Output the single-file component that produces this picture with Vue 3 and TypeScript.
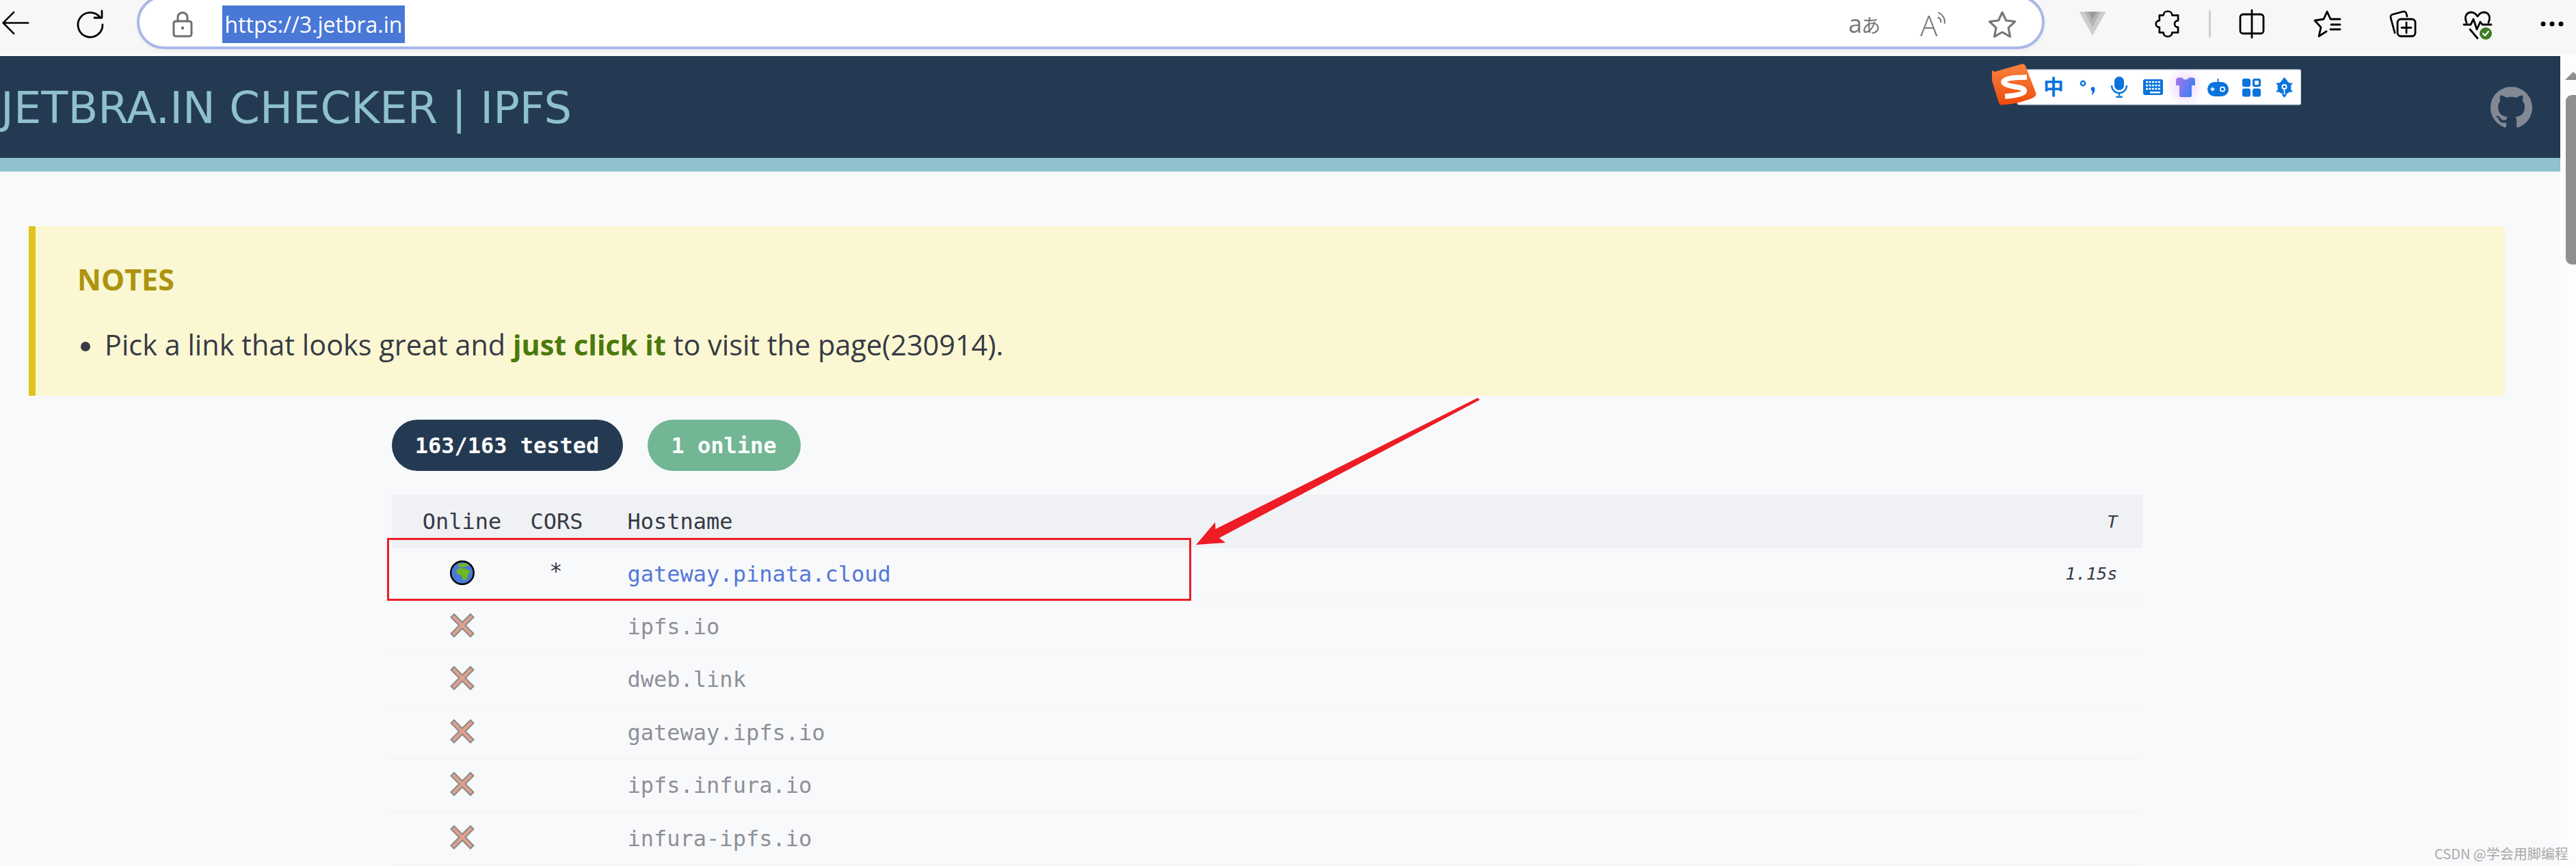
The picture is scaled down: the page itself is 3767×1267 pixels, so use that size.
<script setup lang="ts">
const failed: string[] = ['ipfs.io', 'dweb.link', 'gateway.ipfs.io', 'ipfs.infura.io', 'infura-ipfs.io']
</script>

<template>
  <div class="screen">
    <div class="toolbar">
      <svg class="back" viewBox="0 0 42 36"><path d="M42 18H2M19 1 2 18l17 17" /></svg>
      <svg class="reload" viewBox="0 0 40 40"><path d="M34 10A18 18 0 1 0 38 21" /><path d="M37 1V11H26" /></svg>
      <div class="address">
        <div class="address-left">
          <svg class="lock" viewBox="0 0 30 38"><rect x="2" y="14" width="26" height="22" rx="3" /><path d="M8 14V8a7 6.5 0 0 1 14 0v6" /><circle cx="15" cy="24" r="2.2" /></svg>
          <span class="url">https://3.jetbra.in</span>
        </div>
        <div class="address-right">
          <span class="translate"><span class="tr-a">a</span><span class="tr-k">あ</span></span>
          <span class="read"><span class="read-a">A</span><svg viewBox="0 0 16 30"><path d="M2 11a8 8 0 0 1 5 8M3 2a18 18 0 0 1 11 19" /></svg></span>
          <svg class="star" viewBox="0 0 42 42"><path d="M21 3l5.6 12 13 1.6-9.600 9 2.600 13L21 32l-11.600 6.600 2.600-13-9.600-9 13-1.600z" /></svg>
        </div>
      </div>
      <div class="extensions">
        <svg class="ext vue" viewBox="0 0 40 36"><path fill="#cdcdcd" d="M0 0h40L20 36z" /><path fill="#b4b4b4" d="M8 0h24L20 24z" /><path fill="#9a9a9a" d="M14 0h12l-6 12z" /></svg>
        <svg class="ext puzzle" viewBox="0 0 38 40"><path d="M12 7C12-1 25-1 25 7h9v8c-7 0-7 10 0 10v8h-9c0 8-13 8-13 0H6v-8c-7 0-7-10 0-10V7z" /></svg>
        <i class="sep"></i>
        <svg class="ext split" viewBox="0 0 38 40"><path d="M17 6H6a4 4 0 0 0-4 4v20a4 4 0 0 0 4 4h11M21 6h11a4 4 0 0 1 4 4v20a4 4 0 0 1-4 4H21M19 0v40" /></svg>
        <svg class="ext fav" viewBox="0 0 40 40"><path d="M20 2 15 13 2 15l9 10-3 13 11-7M20 2l5 11h14M26 21h13M25 28h14" /></svg>
        <svg class="ext coll" viewBox="0 0 40 40"><rect x="13" y="13" width="26" height="25" rx="5" /><path d="M26 18v15M19 25.500h14M9 33 3 11a4 4 0 0 1 3-5L21 2a4 4 0 0 1 5 3l1 4" /></svg>
        <svg class="ext health" viewBox="0 0 40 42"><path d="M4 17C0 8 4 2 11 2c4 0 7 3 9 6 2-3 5-6 9-6 7 0 11 6 7 15M0 20h10l4-8 5 15 5-11 3 4h13M9 27l11 13" /><circle class="badge" cx="32" cy="33" r="9" /><path class="tick" d="M28 33l3 3 5-6" /></svg>
        <svg class="dots" viewBox="0 0 34 8"><circle cx="4" cy="4" r="3.500" /><circle cx="17" cy="4" r="3.500" /><circle cx="30" cy="4" r="3.500" /></svg>
      </div>
    </div>

    <div class="viewport">
      <div class="page">
        <header class="header">
          <h1 class="title">JETBRA.IN CHECKER | IPFS</h1>
          <svg class="ime" viewBox="2913 93 452 61">
            <defs>
              <linearGradient id="logoFill" x1="0" y1="0" x2="0" y2="1"><stop offset="0" stop-color="#f7853f" /><stop offset="1" stop-color="#f04a0c" /></linearGradient>
              <linearGradient id="shirtFill" x1="0" y1="0" x2="1" y2="0.4"><stop offset="0" stop-color="#a876ec" /><stop offset="1" stop-color="#3f7ff0" /></linearGradient>
              <radialGradient id="halo" cx="0.5" cy="0.5" r="0.6"><stop offset="0.4" stop-color="#f3e4ff" /><stop offset="1" stop-color="#ffffff" /></radialGradient>
            </defs>
            <rect x="2950" y="102" width="415" height="51" rx="3" fill="#fff" stroke="#c3cfdd" stroke-width="1.500" />
            <rect x="3171" y="103" width="48" height="49" fill="url(#halo)" />
            <path d="M2917 105 2957 93.500a5 5 0 0 1 5 3l15 39a6 6 0 0 1-3 7c-12 6-30 10-47 11-2 0-3-1-4-3l-13-42a5 5 0 0 1 2-6z" fill="url(#logoFill)" />
            <path d="M2964 113c-15 0-29 1-33 5-4 4 4 7 16 9 8 1 15 3 13 7-2 4-15 6-28 7" fill="none" stroke="#fff" stroke-width="7.500" />
            <text class="ime-zh" x="3003" y="138" text-anchor="middle">中</text>
            <circle cx="3046" cy="122" r="3.200" fill="none" stroke="#0a73dc" stroke-width="2.400" />
            <path d="M3060 127a3.500 3.500 0 0 1 3.500 3.500c0 4-2 7-5 9 1-3 1.500-5 1-6a3.500 3.500 0 0 1 .5-6.500z" fill="#0a73dc" />
            <rect x="3092" y="112" width="14" height="20" rx="7" fill="#0a73dc" />
            <path d="M3088 125a11 11 0 0 0 22 0M3099 136v4" fill="none" stroke="#0a73dc" stroke-width="2.400" />
            <rect x="3094" y="140.500" width="10" height="2.500" rx="1.200" fill="#0a73dc" />
            <rect x="3134" y="116" width="29" height="23" rx="3" fill="#0a73dc" />
            <path d="M3138 120h21M3138 125h21M3138 130h21" stroke="#fff" stroke-width="2.500" stroke-dasharray="3 1.500" />
            <rect x="3144" y="134" width="15" height="2.500" fill="#fff" />
            <path d="M3182 117c0-2 2-3.500 4-3.500h5c1 2 3 3 5 3s4-1 5-3h5c2 0 4 1.500 4 3.500v8h-5v15c0 1-1 2-2 2h-14c-1 0-2-1-2-2v-15h-5z" fill="url(#shirtFill)" />
            <rect x="3228" y="120" width="31" height="21" rx="10.500" fill="#0a73dc" />
            <path d="M3243.500 115v6" stroke="#0a73dc" stroke-width="2" />
            <circle cx="3250" cy="130.500" r="3.200" fill="none" stroke="#fff" stroke-width="1.800" />
            <path d="M3232.500 130.500h6M3235.500 127.500v6" stroke="#fff" stroke-width="1.800" />
            <rect x="3279" y="115" width="12" height="12" rx="3" fill="#0a73dc" />
            <rect x="3294" y="115" width="12" height="12" rx="3" fill="#0a73dc" />
            <rect x="3297" y="118" width="6" height="6" rx="1" fill="#fff" />
            <rect x="3279" y="129.500" width="12" height="12" rx="3" fill="#0a73dc" />
            <rect x="3294" y="129.500" width="12" height="12" rx="3" fill="#0a73dc" />
            <circle cx="3340.500" cy="128" r="10" fill="#0a73dc" />
            <path d="M3340.500 113l5 6h-10zM3328 122l5-1-1 5zM3353 122l-5-1 1 5zM3328 134l5 1-1-5zM3353 134l-5 1 1-5zM3340.500 143l-4-5h8z" fill="#0a73dc" />
            <circle cx="3340.500" cy="127" r="3" fill="none" stroke="#fff" stroke-width="2" />
            <path d="M3340.500 130v8" stroke="#fff" stroke-width="1.600" />
          </svg>
          <svg class="github" viewBox="0 0 16 16"><path d="M8 0C3.58 0 0 3.58 0 8c0 3.54 2.29 6.53 5.47 7.59.4.07.55-.17.55-.38 0-.19-.01-.82-.01-1.49-2.01.37-2.53-.49-2.69-.94-.09-.23-.48-.94-.82-1.13-.28-.15-.68-.52-.01-.53.63-.01 1.08.58 1.23.82.72 1.21 1.87.87 2.33.66.07-.52.28-.87.51-1.07-1.78-.2-3.64-.89-3.64-3.95 0-.87.31-1.59.82-2.15-.08-.2-.36-1.02.08-2.12 0 0 .67-.21 2.2.82.64-.18 1.32-.27 2-.27.68 0 1.36.09 2 .27 1.53-1.04 2.2-.82 2.2-.82.44 1.1.16 1.92.08 2.12.51.56.82 1.27.82 2.15 0 3.07-1.87 3.75-3.65 3.95.29.25.54.73.54 1.48 0 1.07-.01 1.93-.01 2.2 0 .21.15.46.55.38A8.013 8.013 0 0016 8c0-4.42-3.58-8-8-8z" /></svg>
        </header>
        <div class="rule"></div>

        <div class="content">
          <section class="notes">
            <h2 class="notes-title">NOTES</h2>
            <div class="notes-item"><i class="bullet"></i><span>Pick a link that looks great and <strong>just click it</strong> to visit the page(230914).</span></div>
          </section>

          <div class="results">
            <div class="badges">
              <span class="pill pill-dark">163/163 tested</span>
              <span class="pill pill-green">1 online</span>
            </div>

            <div class="table">
              <div class="row head">
                <span class="col-online">Online</span>
                <span class="col-cors">CORS</span>
                <span class="col-host">Hostname</span>
                <em class="col-time">T</em>
              </div>
              <div class="row body-row">
                <span class="col-online">
                  <svg class="status" viewBox="0 0 36 36">
                    <circle cx="18" cy="18" r="16.800" fill="#4a78d6" stroke="#000" stroke-width="2.400" />
                    <path fill="#6db81f" d="M11.500 5 24.600 3.900 28 7.200l-8.300 2.600-6.600 0zM9.200 13.800l5.600-2.700 8.100 1 6.600 3.300-3.300 6.500-1.600 5-4.900 2.600-3.300-7.600-5.600-2.200z" />
                  </svg>
                </span>
                <span class="col-cors star-cell">*</span>
                <span class="col-host"><a class="link">gateway.pinata.cloud</a></span>
                <em class="col-time">1.15s</em>
              </div>
              <div v-for="host in failed" :key="host" class="row body-row">
                <span class="col-online">
                  <svg class="status" viewBox="0 0 36 36">
                    <path fill="#e2a08c" stroke="#8a8a8a" stroke-width="2" d="M6 1.500 18 13.500 30 1.500 34.500 6 22.500 18 34.500 30 30 34.500 18 22.500 6 34.500 1.500 30 13.500 18 1.500 6z" />
                  </svg>
                </span>
                <span class="col-cors"></span>
                <span class="col-host dead">{{ host }}</span>
                <em class="col-time"></em>
              </div>
            </div>
          </div>
        </div>
      </div>

      <div class="scrollbar">
        <i class="scroll-arrow"></i>
        <i class="scroll-thumb"></i>
      </div>
    </div>

    <div class="mark-box"></div>
    <svg class="mark-arrow" viewBox="1749 582 416 216"><path fill="#ee1c25" d="M1749 797l28-33 .5 10L2161 582l3 3-381 202 9 7z" /></svg>
    <div class="watermark">CSDN @学会用脚编程</div>
  </div>
</template>

<style>
html, body { margin: 0; padding: 0; background: #f8f9fb; }
</style>

<style scoped>
.screen {
  position: relative;
  width: 3767px;
  height: 1267px;
  overflow: hidden;
  background: #f8f9fb;
  display: flex;
  flex-direction: column;
  font-family: "Open Sans", "Noto Sans", sans-serif;
}

/* Browser chrome */
.toolbar {
  flex: 0 0 82px;
  display: flex;
  align-items: flex-start;
  background: #f7f7f7;
  box-sizing: border-box;
  padding-left: 2px;
  border-bottom: 3px solid #fbfbfb;
}
.toolbar svg { fill: none; stroke: #000; stroke-width: 2.800; stroke-linejoin: round; stroke-linecap: round; overflow: visible; }
.back { width: 40px; height: 33px; margin-top: 17px; }
.reload { width: 40px; height: 40px; margin: 15px 0 0 70px; }
.address {
  box-sizing: border-box;
  width: 2790px;
  height: 79px;
  margin: -7px 0 0 48px;
  border: 4px solid #a9b8e8;
  border-radius: 46px;
  background: #fff;
  box-shadow: 0 3px 4px #efefef;
  display: flex;
  align-items: center;
  justify-content: space-between;
}
.address-left { display: flex; align-items: center; padding-left: 48px; margin-top: 6px; }
.toolbar .lock { width: 30px; height: 38px; stroke: #6e6e6e; stroke-width: 3; }
.toolbar .lock circle { fill: #6e6e6e; stroke: none; }
.url {
  margin-left: 43px;
  width: 267px;
  height: 55px;
  background: #4a78d6;
  color: #fff;
  font-size: 32px;
  line-height: 55px;
  white-space: nowrap;
  text-align: center;
}
.address-right { display: flex; align-items: center; padding-right: 37px; margin-top: 6px; }
.translate { display: flex; align-items: baseline; width: 44px; color: #757575; line-height: 40px; font-family: "Noto Sans CJK JP", "Open Sans", sans-serif; }
.tr-a { font-size: 36px; font-family: "Open Sans", sans-serif; }
.tr-k { font-size: 28px; margin-left: -1px; }
.read { display: flex; align-items: flex-start; margin-left: 61px; width: 40px; height: 38px; color: #757575; }
.read-a { font-size: 42px; line-height: 40px; font-weight: 300; }
.toolbar .read svg { width: 14px; height: 24px; margin-left: -1px; stroke: #757575; stroke-width: 2.600; }
.toolbar .star { width: 42px; height: 42px; margin-left: 59px; stroke: #757575; stroke-width: 3; }

.extensions { display: flex; align-items: flex-start; margin-left: 50px; }
.ext { width: 40px; height: 40px; margin-top: 15px; }
.toolbar .vue { height: 35px; margin-top: 17px; stroke: none; }
.puzzle { margin-left: 72px; width: 37px; }
.sep { width: 3px; height: 40px; margin: 15px 0 0 41px; background: #cfcfcf; }
.split { margin-left: 40px; }
.fav { margin-left: 70px; }
.coll { margin-left: 70px; }
.health { margin-left: 70px; height: 42px; margin-top: 16px; }
.toolbar .health .badge { fill: #3f7d23; stroke: none; }
.toolbar .health .tick { stroke: #fff; stroke-width: 2.200; }
.toolbar .dots { width: 34px; height: 8px; margin: 31px 0 0 72px; fill: #000; stroke: none; }

/* Page */
.viewport { flex: 1; display: flex; min-height: 0; }
.page { width: 3744px; flex: none; }
.header {
  position: relative;
  height: 149px;
  background: #243a52;
  display: flex;
  align-items: center;
  justify-content: space-between;
  box-sizing: border-box;
  padding: 0 41px 0 1px;
}
.title {
  margin: 0;
  color: #8fc1cd;
  font-family: "DejaVu Sans", sans-serif;
  font-size: 64px;
  font-weight: 400;
  line-height: 1;
  position: relative;
  top: 1px;
}
.ime { position: absolute; left: 2913px; top: 11px; width: 452px; height: 61px; }
.ime-zh { font-family: "Noto Sans CJK SC", sans-serif; font-size: 30px; font-weight: 700; fill: #0a73dc; }
.github { width: 61px; height: 61px; fill: #838895; margin-top: 2px; }
.rule { height: 20px; background: #90c1cc; }

.content { padding: 80px 81px 0 42px; }
.notes {
  box-sizing: border-box;
  height: 248px;
  background: #fbf7d2;
  border-left: 10px solid #e0c31c;
  padding: 46px 0 0 61px;
  color: #363a45;
}
.notes-title {
  margin: 0;
  color: #ac9410;
  font-size: 43px;
  line-height: 64px;
  font-weight: 700;
}
.notes-item { display: flex; align-items: center; margin-top: 33px; font-size: 41.400px; line-height: 60px; white-space: nowrap; }
.notes-item strong { color: #4a7a0c; font-weight: 700; }
.bullet { width: 14px; height: 14px; border-radius: 50%; background: #363a45; margin: 6px 21px 0 5px; flex: none; }

.results { width: 2560px; margin: 35px auto 0; font-family: "DejaVu Sans Mono", "Liberation Mono", monospace; }
.badges { display: flex; gap: 36px; height: 75px; }
.pill {
  display: flex;
  align-items: center;
  justify-content: center;
  box-sizing: border-box;
  height: 75px;
  border-radius: 38px;
  color: #fff;
  font-size: 32px;
  font-weight: 700;
  white-space: nowrap;
}
.pill-dark { width: 338px; background: #243a52; }
.pill-green { width: 224px; background: #72b694; }

.table { margin-top: 35px; }
.row {
  display: grid;
  grid-template-columns: 114px 75px 1fr auto;
  column-gap: 43px;
  align-items: center;
  box-sizing: border-box;
  padding: 0 36px 0 46px;
  color: #363a45;
  font-size: 32px;
}
.head { height: 78px; background: #f0f1f5; }
.body-row { height: 77.400px; border-bottom: 2px solid #f4f5f7; }
.col-online { display: flex; justify-content: center; }
.col-cors { text-align: center; }
.col-host { padding-left: 24px; white-space: nowrap; }
.col-time { font-size: 25.300px; font-style: italic; min-height: 1px; }
.star-cell { position: relative; top: -5px; }
.status { width: 36px; height: 36px; display: block; position: relative; top: -2px; }
.link { color: #5477d8; text-decoration: none; }
.dead { color: #8e9096; }

.scrollbar {
  flex: 1;
  background: #fdfdfd;
  overflow: hidden;
  display: flex;
  flex-direction: column;
  padding: 23px 0 0 7px;
}
.scroll-arrow {
  width: 0;
  height: 0;
  border-left: 12px solid transparent;
  border-right: 12px solid transparent;
  border-bottom: 12px solid #8f8f8f;
}
.scroll-thumb {
  width: 34px;
  height: 248px;
  margin: 22px 0 0 1px;
  border-radius: 9px;
  background: #8f8f8f;
}

/* Hand-drawn annotation lying over the screenshot */
.mark-box {
  position: absolute;
  left: 566px;
  top: 787px;
  width: 1176px;
  height: 92px;
  box-sizing: border-box;
  border: 3px solid #ee1c25;
  border-radius: 1px;
}
.mark-arrow { position: absolute; left: 1749px; top: 582px; width: 416px; height: 216px; }
.watermark {
  position: absolute;
  left: 3560px;
  top: 1236px;
  color: #a9a9a9;
  font-family: "Noto Sans CJK SC", sans-serif;
  font-size: 20px;
  line-height: 26px;
  white-space: nowrap;
}
</style>
